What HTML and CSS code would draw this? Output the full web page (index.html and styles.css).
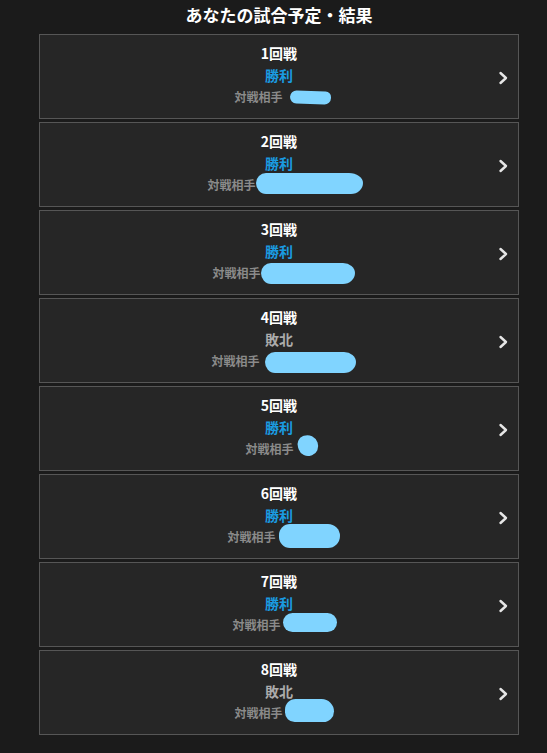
FILE: index.html
```html
<!DOCTYPE html>
<html lang="ja">
<head>
<meta charset="utf-8">
<title>あなたの試合予定・結果</title>
<link rel="stylesheet" href="styles.css">
</head>
<body>
<div class="wrap">
  <h1 class="title">あなたの試合予定・結果</h1>
  <ul class="list">
    <li class="card">
      <div class="round">1回戦</div>
      <div class="result win">勝利</div>
      <div class="opp"><span class="label">対戦相手</span><span class="name n1"><span class="blob"></span></span></div>
      <svg class="chev" viewBox="0 0 10 14"><polyline points="2.5,2 8,7 2.5,12"/></svg>
    </li>
    <li class="card">
      <div class="round">2回戦</div>
      <div class="result win">勝利</div>
      <div class="opp"><span class="label">対戦相手</span><span class="name n2"><span class="blob"></span></span></div>
      <svg class="chev" viewBox="0 0 10 14"><polyline points="2.5,2 8,7 2.5,12"/></svg>
    </li>
    <li class="card">
      <div class="round">3回戦</div>
      <div class="result win">勝利</div>
      <div class="opp"><span class="label">対戦相手</span><span class="name n3"><span class="blob"></span></span></div>
      <svg class="chev" viewBox="0 0 10 14"><polyline points="2.5,2 8,7 2.5,12"/></svg>
    </li>
    <li class="card">
      <div class="round">4回戦</div>
      <div class="result lose">敗北</div>
      <div class="opp"><span class="label">対戦相手</span><span class="name n4"><span class="blob"></span></span></div>
      <svg class="chev" viewBox="0 0 10 14"><polyline points="2.5,2 8,7 2.5,12"/></svg>
    </li>
    <li class="card">
      <div class="round">5回戦</div>
      <div class="result win">勝利</div>
      <div class="opp"><span class="label">対戦相手</span><span class="name n5"><span class="blob"></span></span></div>
      <svg class="chev" viewBox="0 0 10 14"><polyline points="2.5,2 8,7 2.5,12"/></svg>
    </li>
    <li class="card">
      <div class="round">6回戦</div>
      <div class="result win">勝利</div>
      <div class="opp"><span class="label">対戦相手</span><span class="name n6"><span class="blob"></span></span></div>
      <svg class="chev" viewBox="0 0 10 14"><polyline points="2.5,2 8,7 2.5,12"/></svg>
    </li>
    <li class="card">
      <div class="round">7回戦</div>
      <div class="result win">勝利</div>
      <div class="opp"><span class="label">対戦相手</span><span class="name n7"><span class="blob"></span></span></div>
      <svg class="chev" viewBox="0 0 10 14"><polyline points="2.5,2 8,7 2.5,12"/></svg>
    </li>
    <li class="card">
      <div class="round">8回戦</div>
      <div class="result lose">敗北</div>
      <div class="opp"><span class="label">対戦相手</span><span class="name n8"><span class="blob"></span></span></div>
      <svg class="chev" viewBox="0 0 10 14"><polyline points="2.5,2 8,7 2.5,12"/></svg>
    </li>
  </ul>
</div>
</body>
</html>
```
FILE: styles.css
```css
html, body {
  margin: 0;
  padding: 0;
  background: #1b1b1b;
  font-family: "Noto Sans CJK JP", "Noto Sans", sans-serif;
  font-weight: 700;
}
.wrap {
  margin-left: 39px;
  width: 480px;
}
.title {
  margin: 0;
  padding-top: 4px;
  height: 30px;
  box-sizing: border-box;
  height: 34px;
  font-size: 17px;
  line-height: 22px;
  color: #ffffff;
  text-align: center;
  font-weight: 700;
}
.list {
  list-style: none;
  margin: 0;
  padding: 0;
  display: flex;
  flex-direction: column;
  gap: 3px;
}
.card {
  position: relative;
  box-sizing: border-box;
  height: 85px;
  border: 1px solid #565656;
  background: #262626;
  padding-top: 7px;
  text-align: center;
}
.round {
  font-size: 14px;
  line-height: 22px;
  color: #ffffff;
}
.result {
  font-size: 14px;
  line-height: 22px;
}
.win { color: #1a9be0; }
.lose { color: #ababab; }
.opp {
  display: flex;
  justify-content: center;
  align-items: center;
  height: 22px;
  font-size: 12px;
  line-height: 22px;
}
.label {
  color: #8a8a8a;
  width: 48px;
  white-space: nowrap;
}
.name {
  position: relative;
  margin-left: 4px;
  height: 22px;
}
.blob {
  position: absolute;
  background: #80d4ff;
  border-radius: 50%;
}
.n1 { width: 37px; }
.n1 .blob { left: 3px; top: 5px; width: 41px; height: 13px; border-radius: 7px 6px 7px 7px; transform: rotate(2deg); }
.n2 { width: 91px; }
.n2 .blob { left: -4px; top: -1px; width: 107px; height: 21px; border-radius: 10px 14px 12px 10px / 10px 10px 11px 11px; }
.n3 { width: 81px; }
.n3 .blob { left: -4px; top: 1px; width: 94px; height: 21px; border-radius: 10px 12px 12px 10px / 10px 10px 11px 11px; }
.n4 { width: 83px; }
.n4 .blob { left: 1px; top: 2px; width: 91px; height: 21px; border-radius: 10px 12px 12px 10px / 10px 10px 11px 11px; }
.n5 { width: 15px; }
.n5 .blob { left: 0; top: -3px; width: 20px; height: 21px; border-radius: 45% 55% 50% 50%; transform: rotate(-20deg); }
.n6 { width: 51px; }
.n6 .blob { left: -1px; top: -2px; width: 61px; height: 24px; border-radius: 11px 12px 12px 11px; }
.n7 { width: 41px; }
.n7 .blob { left: -2px; top: -1px; width: 54px; height: 19px; border-radius: 10px; }
.n8 { width: 37px; }
.n8 .blob { left: -2px; top: -3px; width: 49px; height: 23px; border-radius: 12px 14px 12px 11px; }
.chev {
  position: absolute;
  right: 10px;
  top: 36px;
  width: 10px;
  height: 14px;
}
.chev polyline {
  fill: none;
  stroke: #e6e6e6;
  stroke-width: 2.4;
  stroke-linecap: round;
  stroke-linejoin: round;
}
```
